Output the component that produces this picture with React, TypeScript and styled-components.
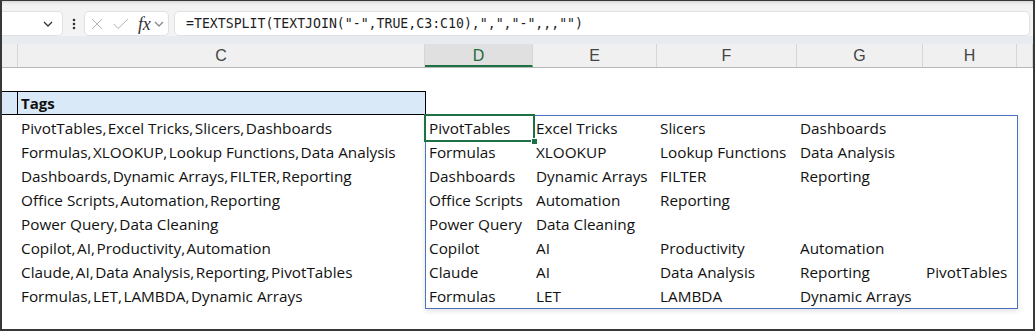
import React, { FC } from 'react'
import styled, { createGlobalStyle } from 'styled-components'

const GlobalStyle = createGlobalStyle`
  html, body {
    margin: 0;
    padding: 0;
    background: #ffffff;
  }
  body {
    font-family: 'Open Sans', 'Liberation Sans', sans-serif;
  }
`

const COLUMNS = '16px 407px 108px 124px 140px 126px 94px 1fr'

const sourceRows = [
  'PivotTables,Excel Tricks,Slicers,Dashboards',
  'Formulas,XLOOKUP,Lookup Functions,Data Analysis',
  'Dashboards,Dynamic Arrays,FILTER,Reporting',
  'Office Scripts,Automation,Reporting',
  'Power Query,Data Cleaning',
  'Copilot,AI,Productivity,Automation',
  'Claude,AI,Data Analysis,Reporting,PivotTables',
  'Formulas,LET,LAMBDA,Dynamic Arrays',
]

const spilled = sourceRows.map((r) => {
  const parts = r.split(',')
  while (parts.length < 5) parts.push('')
  return parts
})

const headers = ['C', 'D', 'E', 'F', 'G', 'H', '']

const Frame = styled.div`
  width: 1035px;
  height: 331px;
  box-sizing: border-box;
  border: 2px solid #383838;
  border-top-width: 1px;
  background: #ffffff;
  overflow: hidden;
  display: flex;
  flex-direction: column;
`

const Toolbar = styled.div`
  flex: none;
  height: 35px;
  box-sizing: border-box;
  padding-top: 10px;
  display: flex;
  align-items: flex-start;
  background: linear-gradient(#d4d4d4 0, #ebebeb 2px, #f3f3f3 5px);
`

const NameBox = styled.div`
  width: 61px;
  height: 25px;
  box-sizing: border-box;
  background: #ffffff;
  border: 1px solid #e1e1e1;
  border-left: none;
  border-radius: 0 5px 5px 0;
  display: flex;
  align-items: center;
  justify-content: flex-end;
  padding-right: 9px;
`

const Kebab = styled.div`
  width: 21px;
  height: 25px;
  display: flex;
  align-items: center;
  justify-content: center;
`

const FunctionBox = styled.div`
  width: 85px;
  height: 25px;
  box-sizing: border-box;
  background: #ffffff;
  border: 1px solid #e1e1e1;
  border-radius: 5px;
  display: flex;
  align-items: center;
  padding-left: 6px;
`

const FxLabel = styled.span`
  margin-left: 9px;
  font-family: 'Liberation Serif', serif;
  font-style: italic;
  font-size: 18px;
  line-height: 1;
  color: #333333;
  letter-spacing: -0.3px;
`

const FxChevron = styled.span`
  margin-left: 4px;
  display: flex;
`

const FormulaBox = styled.div`
  flex: 1;
  height: 25px;
  margin: 0 3px 0 5px;
  box-sizing: border-box;
  background: #ffffff;
  border: 1px solid #e1e1e1;
  border-radius: 5px;
  padding-left: 11px;
  font-family: 'DejaVu Sans Mono', 'Liberation Mono', monospace;
  font-size: 13.2px;
  line-height: 23px;
  color: #1e1e1e;
  white-space: pre;
`

const HeaderStripe = styled.div`
  flex: none;
  height: 8px;
  background: #e8ebf0;
`

const ColumnHeaders = styled.div`
  flex: none;
  height: 24px;
  box-sizing: border-box;
  display: grid;
  grid-template-columns: ${COLUMNS};
  border-bottom: 1px solid #b8b8b8;
  background: #f0f0f0;
`

const HeaderCell = styled.div<{ $selected?: boolean }>`
  box-sizing: border-box;
  border-right: 1px solid #d6d6d6;
  display: flex;
  align-items: center;
  justify-content: center;
  font-family: 'Liberation Sans', sans-serif;
  font-size: 16px;
  color: ${(p) => (p.$selected ? '#1d6b40' : '#444444')};
  background: ${(p) => (p.$selected ? '#e0e0e0' : 'transparent')};
  border-bottom: ${(p) => (p.$selected ? '2px solid #1e7145' : 'none')};
  padding-top: ${(p) => (p.$selected ? '2px' : '0')};
`

const Body = styled.div`
  flex: 1;
  display: flex;
  flex-direction: column;
  color: #111111;
  font-size: 15.3px;
`

const EmptyRow = styled.div`
  height: 23px;
  flex: none;
`

const TagsBand = styled.div`
  width: 424px;
  height: 24px;
  box-sizing: border-box;
  display: grid;
  grid-template-columns: 16px 1fr;
  border: 1px solid #000000;
  border-left: none;
  background: #dae9f8;
`

const BandSpacer = styled.div`
  border-right: 1px solid #000000;
`

const BandTitle = styled.div`
  padding-left: 3px;
  font-size: 15px;
  font-weight: 700;
  line-height: 22px;
`

const DataArea = styled.div`
  display: flex;
  align-items: flex-start;
`

const LeftPad = styled.div`
  width: 16px;
  flex: none;
`

const SourceColumn = styled.div`
  width: 407px;
  flex: none;
  padding-top: 1px;
  display: flex;
  flex-direction: column;
`

const Cell = styled.div<{ $active?: boolean }>`
  height: 24px;
  line-height: 24px;
  padding-left: 3px;
  white-space: nowrap;
  position: relative;
  ${(p) =>
    p.$active &&
    `
    z-index: 1;
    outline: 2px solid #1e7145;
    &::after {
      content: '';
      position: absolute;
      right: -5px;
      bottom: -5px;
      width: 5px;
      height: 5px;
      background: #1e7145;
      border: 1px solid #ffffff;
    }
  `}
`

const Comma = styled.span`
  margin-right: 1.5px;
`

const SpillRange = styled.div`
  flex: none;
  display: grid;
  grid-template-columns: 107px 124px 140px 126px 94px;
  grid-auto-rows: 24px;
  border: 1px solid #4a74c2;
  box-shadow: 0 2px 5px rgba(0, 0, 0, 0.12);
`

const Chevron: FC<{ color: string }> = ({ color }) => (
  <svg width="10" height="6" viewBox="0 0 10 6">
    <polyline points="1,1 5,5 9,1" fill="none" stroke={color} strokeWidth="1.3" />
  </svg>
)

const JoinedTags: FC<{ text: string }> = ({ text }) => {
  const parts = text.split(',')
  return (
    <>
      {parts.map((p, i) => (
        <React.Fragment key={i}>
          {p}
          {i < parts.length - 1 && <Comma>,</Comma>}
        </React.Fragment>
      ))}
    </>
  )
}

export default function App() {
  return (
    <>
      <GlobalStyle />
      <Frame>
        <Toolbar>
          <NameBox>
            <Chevron color="#333333" />
          </NameBox>
          <Kebab>
            <svg width="4" height="12" viewBox="0 0 4 12">
              <circle cx="2" cy="2" r="1.3" fill="#333" />
              <circle cx="2" cy="6" r="1.3" fill="#333" />
              <circle cx="2" cy="10" r="1.3" fill="#333" />
            </svg>
          </Kebab>
          <FunctionBox>
            <svg width="12" height="12" viewBox="0 0 12 12">
              <path d="M1 1 L11 11 M11 1 L1 11" stroke="#b4b4b4" strokeWidth="1" fill="none" />
            </svg>
            <svg width="16" height="12" viewBox="0 0 16 12" style={{ marginLeft: 10 }}>
              <polyline points="1,6 5,10.5 15,1" stroke="#b4b4b4" strokeWidth="1" fill="none" />
            </svg>
            <FxLabel>fx</FxLabel>
            <FxChevron>
              <Chevron color="#8a8a8a" />
            </FxChevron>
          </FunctionBox>
          <FormulaBox>=TEXTSPLIT(TEXTJOIN("-",TRUE,C3:C10),",","-",,,"")</FormulaBox>
        </Toolbar>
        <HeaderStripe />
        <ColumnHeaders>
          <HeaderCell />
          {headers.map((h) => (
            <HeaderCell key={h || 'I'} $selected={h === 'D'}>
              {h}
            </HeaderCell>
          ))}
        </ColumnHeaders>
        <Body>
          <EmptyRow />
          <TagsBand>
            <BandSpacer />
            <BandTitle>Tags</BandTitle>
          </TagsBand>
          <DataArea>
            <LeftPad />
            <SourceColumn>
              {sourceRows.map((r) => (
                <Cell key={r}>
                  <JoinedTags text={r} />
                </Cell>
              ))}
            </SourceColumn>
            <SpillRange>
              {spilled.map((row, i) =>
                row.map((v, j) => (
                  <Cell key={`${i}-${j}`} $active={i === 0 && j === 0}>
                    {v}
                  </Cell>
                ))
              )}
            </SpillRange>
          </DataArea>
        </Body>
      </Frame>
    </>
  )
}
